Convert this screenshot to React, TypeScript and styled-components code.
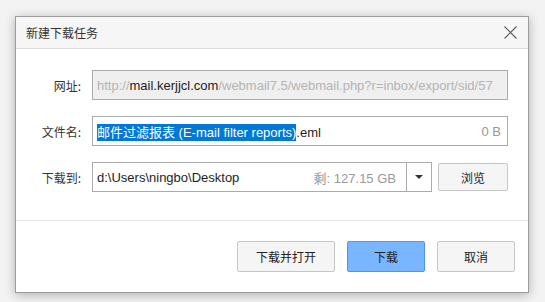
import React from "react"
import styled, { createGlobalStyle } from "styled-components"

const GlobalStyle = createGlobalStyle`
  html, body {
    margin: 0;
    padding: 0;
    background: #f3f3f3;
    font-family: "Noto Sans CJK SC", "Noto Sans", sans-serif;
    font-size: 12px;
    color: #222;
  }
`

const fields = {
  urlHead: "http://",
  urlHost: "mail.kerjjcl.com",
  urlTail: "/webmail7.5/webmail.php?r=inbox/export/sid/57",
  fileSelected: "邮件过滤报表 (E-mail filter reports)",
  fileExt: ".eml",
  fileSize: "0 B",
  folder: "d:\\Users\\ningbo\\Desktop",
  free: "剩: 127.15 GB",
}

export default function App() {
  return (
    <>
      <GlobalStyle />
      <S.Page>
        <S.Dialog>
          <S.TitleBar>
            <S.Title>新建下载任务</S.Title>
            <S.Close aria-label="关闭">
              <svg width="13" height="13" viewBox="0 0 13 13">
                <path d="M0.5 0.5 L12.5 12.5 M12.5 0.5 L0.5 12.5" stroke="#5a5a5a" strokeWidth="1.1" fill="none" />
              </svg>
            </S.Close>
          </S.TitleBar>

          <S.Body>
            <S.Form>
              <S.Label>网址:</S.Label>
              <S.Field disabled>
                <S.FieldText>
                  <S.Muted>{fields.urlHead}</S.Muted>
                  {fields.urlHost}
                  <S.Muted>{fields.urlTail}</S.Muted>
                </S.FieldText>
              </S.Field>

              <S.Label>文件名:</S.Label>
              <S.Field>
                <S.FieldText>
                  <S.Selected>{fields.fileSelected}</S.Selected>
                  {fields.fileExt}
                </S.FieldText>
                <S.Hint>{fields.fileSize}</S.Hint>
              </S.Field>

              <S.Label>下载到:</S.Label>
              <S.PathRow>
                <S.Field>
                  <S.FieldText>{fields.folder}</S.FieldText>
                  <S.Hint>{fields.free}</S.Hint>
                  <S.DropButton>
                    <S.Caret />
                  </S.DropButton>
                </S.Field>
                <S.Button width={70} height={28}>浏览</S.Button>
              </S.PathRow>
            </S.Form>
          </S.Body>

          <S.Footer>
            <S.Button width={98}>下载并打开</S.Button>
            <S.Button width={78} primary>下载</S.Button>
            <S.Button width={78}>取消</S.Button>
          </S.Footer>
        </S.Dialog>
      </S.Page>
    </>
  )
}

const fieldFont = `"Liberation Sans", "Noto Sans CJK SC", sans-serif`

const S = {
  Page: styled.div`
    padding: 16px 0 0 15px;
    height: 302px;
    box-sizing: border-box;
  `,
  Dialog: styled.div`
    width: 514px;
    height: 277px;
    box-sizing: border-box;
    display: flex;
    flex-direction: column;
    background: #fff;
    border: 1px solid #9c9c9c;
    box-shadow: 0 2px 10px rgba(0, 0, 0, 0.28);
  `,
  TitleBar: styled.div`
    height: 32px;
    box-sizing: border-box;
    display: flex;
    align-items: center;
    justify-content: space-between;
    padding: 0 11px 0 10px;
    background: #f6f6f6;
    border-bottom: 1px solid #dcdcdc;
  `,
  Title: styled.div`
    font-size: 12px;
    color: #333;
    padding-bottom: 1px;
  `,
  Close: styled.div`
    display: flex;
    width: 13px;
    height: 13px;
  `,
  Body: styled.div`
    flex: 1;
    padding: 21px 20px 0 0;
  `,
  Form: styled.div`
    display: grid;
    grid-template-columns: 65px 1fr;
    column-gap: 11px;
    row-gap: 16px;
    align-items: center;
  `,
  Label: styled.div`
    text-align: right;
    color: #333;
    font-size: 12px;
  `,
  Field: styled.div<{ disabled?: boolean }>`
    flex: 1;
    height: 30px;
    box-sizing: border-box;
    display: flex;
    align-items: center;
    padding-left: 4px;
    padding-right: 4px;
    min-width: 0;
    background: ${({ disabled }) => (disabled ? "#efefef" : "#fff")};
    border: 1px solid #ababab;
    overflow: hidden;
  `,
  FieldText: styled.div`
    flex: 1;
    min-width: 0;
    white-space: nowrap;
    overflow: hidden;
    font-family: ${fieldFont};
    font-size: 13px;
    color: #1e1e1e;
  `,
  Muted: styled.span`
    color: #b4b4b4;
  `,
  Selected: styled.span`
    background: #0078d7;
    color: #fff;
    padding: 1px 0;
  `,
  Hint: styled.div`
    flex: none;
    font-family: ${fieldFont};
    font-size: 13px;
    color: #999;
    padding-left: 8px;
    padding-right: 2px;
  `,
  PathRow: styled.div`
    display: flex;
    align-items: center;
    gap: 6px;
  `,
  DropButton: styled.div`
    flex: none;
    align-self: stretch;
    width: 24px;
    margin: 0 -4px 0 8px;
    display: flex;
    align-items: center;
    justify-content: center;
    border-left: 1px solid #ababab;
  `,
  Caret: styled.div`
    width: 0;
    height: 0;
    border-left: 4px solid transparent;
    border-right: 4px solid transparent;
    border-top: 4px solid #333;
  `,
  Footer: styled.div`
    height: 72px;
    box-sizing: border-box;
    display: flex;
    justify-content: flex-end;
    align-items: flex-start;
    gap: 12px;
    padding: 20px 13px 0 0;
    border-top: 1px solid #e6e6e6;
  `,
  Button: styled.div<{ width: number; height?: number; primary?: boolean }>`
    width: ${({ width }) => width}px;
    height: ${({ height }) => height ?? 31}px;
    box-sizing: border-box;
    flex: none;
    display: flex;
    align-items: center;
    justify-content: center;
    font-size: 12px;
    color: #222;
    border-radius: 2px;
    background: ${({ primary }) => (primary ? "#7ab6ff" : "#f5f5f5")};
    border: 1px solid ${({ primary }) => (primary ? "#4f95ef" : "#c6c6c6")};
  `,
}
